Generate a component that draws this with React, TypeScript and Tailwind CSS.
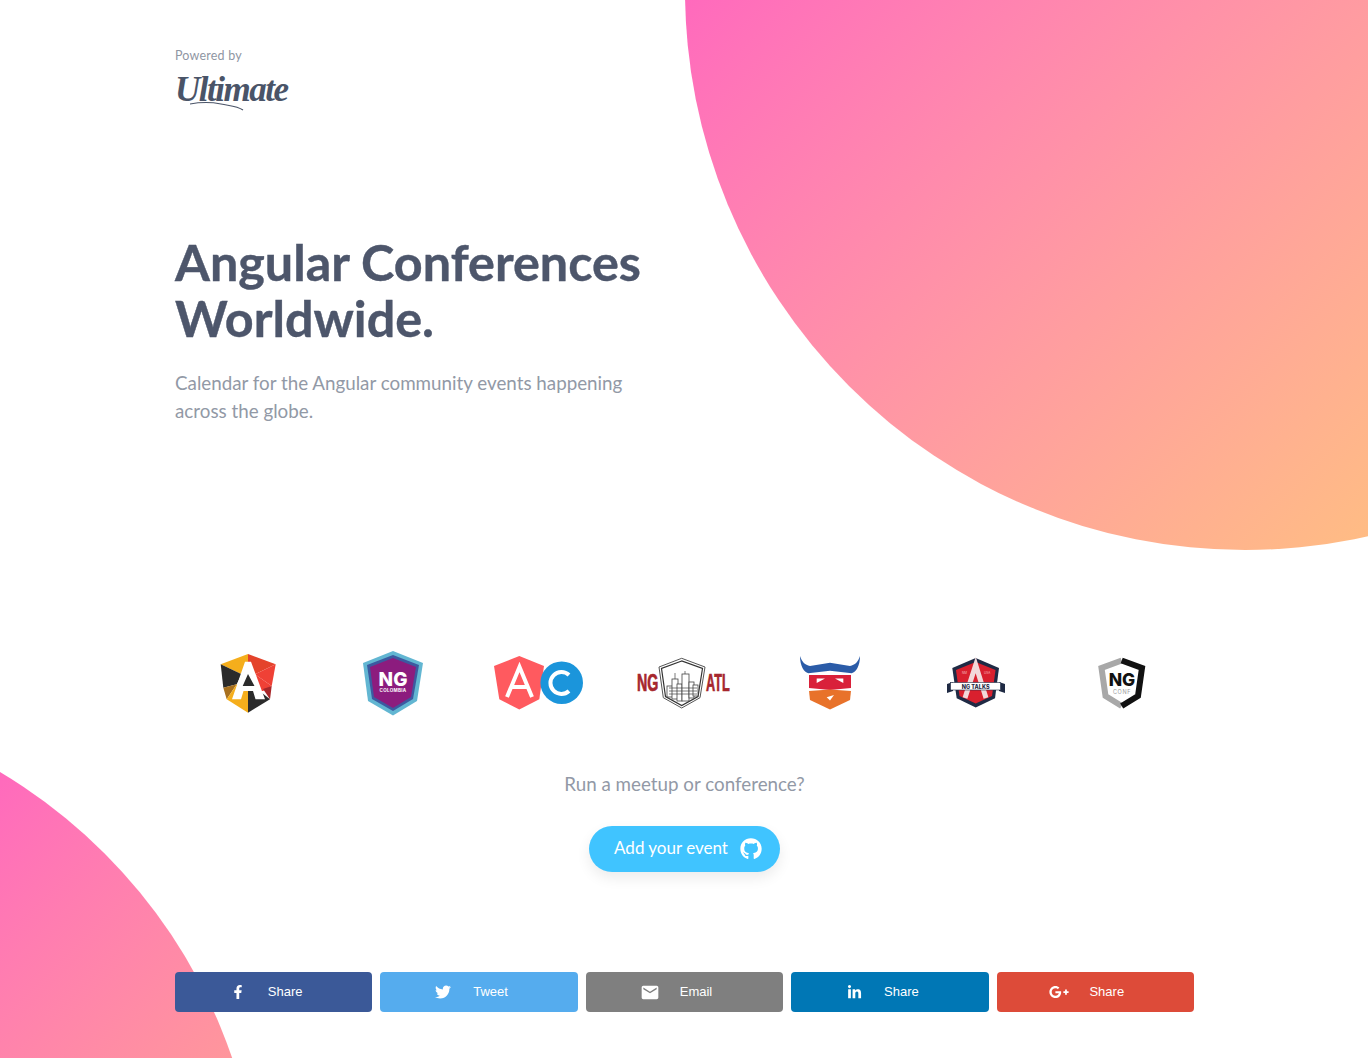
import React from 'react'
import { FaFacebookF, FaGithub, FaGooglePlusG, FaLinkedinIn, FaTwitter } from 'react-icons/fa'
import { MdEmail } from 'react-icons/md'

function AngularLogo() {
  return (
    <svg width="56" height="60" viewBox="220 652 56 60">
      <polygon points="248,653 220.7,663.3 241.7,673.3 248,673" fill="#f5ae1c" />
      <polygon points="248,653 275.7,663.3 255,673.3 248,673" fill="#e4432b" />
      <polygon points="275.7,663.3 271.7,685 255,673.3" fill="#ef4136" />
      <polygon points="255,673.3 271.7,685 263,690 255,690" fill="#ef4136" />
      <polygon points="271.7,685 270,698.3 263,688" fill="#a8272a" />
      <polygon points="220.7,663.3 241.7,673.3 236.7,683.3 223.3,686.7" fill="#2b2b2b" />
      <polygon points="223.3,686.7 236.7,683.3 226.7,698.3" fill="#a8701e" />
      <polygon points="226.7,698.3 248,711.7 248,685 236.7,683.3" fill="#f5ae1c" />
      <polygon points="248,711.7 270,698.3 257,688 248,688" fill="#2b2b2b" />
      <polygon points="248,668 241,686 256,686" fill="#2b2b2b" />
      <path fillRule="evenodd" d="M245 660.7 H251 L265 698.3 H255.5 L253 690 H243.5 L241 698.3 H232 Z M248 673 L242.7 685 H254.5 Z" fill="#fff" />
    </svg>
  )
}

function ColombiaLogo() {
  return (
    <svg width="60" height="65" viewBox="363 650 60 65">
      <polygon points="393,650 423,662 417,700 393,714.5 368,700 363,662" fill="#62b6d2" />
      <polygon points="393,654 419,664 413,698 393,710 372,698 367,664" fill="#3c5aa0" />
      <polygon points="393,657 416,666 411,696 393,707 374,696 370,666" fill="#8c1c7e" />
      <text x="393" y="685" textAnchor="middle" fill="#fff" fontSize="19" fontWeight="800" fontFamily="Inter, sans-serif">NG</text>
      <text x="393" y="690.5" textAnchor="middle" fill="#fff" fontSize="4.5" fontWeight="700" fontFamily="Inter, sans-serif" letterSpacing="0.3">COLOMBIA</text>
    </svg>
  )
}

function AcLogo() {
  return (
    <svg width="90" height="54" viewBox="494 656 90 54">
      <polygon points="519.3,656 494,666 499.3,699.3 519.3,709.5 539.3,699.3 544,666" fill="#ff5a5f" />
      <circle cx="561.7" cy="682.7" r="21.3" fill="#1b95db" />
      <path d="M507 697 L519.5 667 L532 697 M511 687 H528" stroke="#fff" strokeWidth="4" fill="none" />
      <path d="M569 675 A11 11 0 1 0 569 691" stroke="#fff" strokeWidth="4" fill="none" />
    </svg>
  )
}

function AtlLogo() {
  return (
    <svg width="96" height="54" viewBox="636 655 96 54">
      <g transform="translate(637 690) scale(0.62 1)">
        <text fill="#a6272d" stroke="#a6272d" strokeWidth="0.7" fontSize="23" fontWeight="700" fontFamily="'Liberation Sans', sans-serif">NG</text>
      </g>
      <g transform="translate(706 690) scale(0.55 1)">
        <text fill="#a6272d" stroke="#a6272d" strokeWidth="0.7" fontSize="23" fontWeight="700" fontFamily="'Liberation Sans', sans-serif">ATL</text>
      </g>
      <polygon points="681.7,657.3 659,666 663.3,696.7 681.7,707 700,696.7 705,666" fill="#fff" stroke="#555" strokeWidth="1" />
      <polygon points="681.7,660 661.5,667.5 665.5,695.5 681.7,704.5 698,695.5 702.5,667.5" fill="#fff" stroke="#333" strokeWidth="1.2" />
      <g stroke="#444" strokeWidth="0.8" fill="#fff">
        <rect x="667" y="685" width="6" height="11" />
        <rect x="672" y="678" width="6" height="20" />
        <rect x="677" y="683" width="5" height="17" />
        <rect x="682" y="673" width="7" height="27" />
        <rect x="689" y="681" width="5" height="16" />
        <rect x="693" y="684" width="5" height="11" />
      </g>
      <path d="M675 678 V672 M685 673 V670 M669 687 H697 M669 690 H697 M669 693 H697" stroke="#444" strokeWidth="0.7" />
    </svg>
  )
}

function VikingLogo() {
  return (
    <svg width="60" height="54" viewBox="800 656 60 54">
      <path d="M800 656 C802 662 805 665 810 666 L830 662.7 L850 666 C855 665 858 662 860 656 C860 666 856 672 851.7 673.3 L830 670.7 L808.3 673.3 C804 672 800 666 800 656 Z" fill="#2b5ca8" />
      <polygon points="809,675 851,675 851,688 830,690 809,688" fill="#d9213a" />
      <polygon points="809,691 830,689.5 851,691 850,700 830,709.5 810,700" fill="#e8722a" />
      <polygon points="816.7,678.5 825,678.5 816.7,683" fill="#fff" />
      <polygon points="843.3,678.5 835,678.5 843.3,683" fill="#fff" />
      <polygon points="826.7,697.3 834,695 830,700.5" fill="#fff" />
    </svg>
  )
}

function TalksLogo() {
  return (
    <svg width="60" height="52" viewBox="946 657 60 52">
      <polygon points="975.7,658 952.3,668 956.7,698.3 975.7,707.5 995,698.3 999,668" fill="#1f2a44" />
      <polygon points="975.7,662 956,670 959.5,696 975.7,703.5 992,696 995.5,670" fill="#d9202e" />
      <path d="M965 698 L975.7 665 L986 698" stroke="#f2d8da" strokeWidth="5" fill="none" />
      <polygon points="947,684 953,682 953,691 947,693" fill="#1f2a44" />
      <polygon points="1005,684 999,682 999,691 1005,693" fill="#1f2a44" />
      <rect x="950.5" y="682.5" width="50" height="7.5" fill="#fff" stroke="#1f2a44" strokeWidth="0.6" />
      <text x="975.7" y="688.5" textAnchor="middle" fill="#1f2a44" fontSize="5.5" fontWeight="800" fontFamily="Inter, sans-serif">NG TALKS</text>
      <text x="962" y="674" fill="#f4b9bd" fontSize="3" fontFamily="Inter, sans-serif">NM</text>
      <text x="984" y="674" fill="#f4b9bd" fontSize="3" fontFamily="Inter, sans-serif">USA</text>
    </svg>
  )
}

function NgConfLogo() {
  return (
    <svg className="ml-[2px]" width="48" height="53" viewBox="1098 656 48 53">
      <path d="M1121.7 659.5 L1101.5 667 L1105.5 695 L1121.7 705" stroke="#a8a8a8" strokeWidth="6" fill="none" />
      <path d="M1121.7 659.5 L1142 667 L1138 695 L1121.7 705" stroke="#111" strokeWidth="6" fill="none" />
      <text x="1122" y="685" textAnchor="middle" fill="#111" fontSize="17.5" fontWeight="800" fontFamily="Inter, sans-serif">NG</text>
      <text x="1122" y="692.5" textAnchor="middle" fill="#9a9a9a" fontSize="5.5" fontFamily="Inter, sans-serif" letterSpacing="0.6">CONF</text>
    </svg>
  )
}

const shareButtons = [
  { label: 'Share', bg: 'bg-[#3b5998]', icon: <FaFacebookF size={14} /> },
  { label: 'Tweet', bg: 'bg-[#55acee]', icon: <FaTwitter size={16} /> },
  { label: 'Email', bg: 'bg-[#7f7f7f]', icon: <MdEmail size={21} /> },
  { label: 'Share', bg: 'bg-[#0077b5]', icon: <FaLinkedinIn size={15} /> },
  { label: 'Share', bg: 'bg-[#dd4b39]', icon: <FaGooglePlusG size={22} /> },
]

export default function App() {
  return (
    <div className="relative h-[1058px] overflow-hidden bg-white pl-[175px] pr-[174px] font-['Lato',sans-serif]">
      <div className="absolute left-[685px] top-[-570px] h-[1120px] w-[1120px] rounded-full bg-linear-to-br from-[#ff69bd] from-25% to-[#ffbc84] to-80%" />
      <div className="absolute left-[-807px] top-[697px] h-[1068px] w-[1068px] rounded-full bg-linear-to-br from-[#ff69bd] from-41% to-[#ffa58c] to-75%" />

      <div className="relative">
        <div className="pt-[48px]">
          <p className="text-[12.5px] leading-4 tracking-[0.2px] text-[#8f96a3]">Powered by</p>
          <div className="relative h-[45px] w-[115px]">
            <span className="absolute left-0 top-[3px] font-['Liberation_Serif',serif] text-[35px] font-bold italic leading-[46px] tracking-[-1.5px] text-[#4a5468]">Ultimate</span>
            <svg className="absolute left-[14px] top-[37px]" width="56" height="10" viewBox="0 0 56 10">
              <path d="M1 3 C12 1 22 1 32 3 C42 5 48 5 54 9" stroke="#4a5468" strokeWidth="1.2" fill="none" />
            </svg>
          </div>
        </div>

        <h1 className="mt-[125px] text-[50.3px] font-bold leading-[56px] text-[#4d566b] [-webkit-text-stroke:0.4px_#4d566b]">
          Angular Conferences
          <br />
          Worldwide.
        </h1>
        <p className="mt-[23px] text-[18.8px] leading-7 text-[#9299a6]">
          Calendar for the Angular community events happening
          <br />
          across the globe.
        </p>

        <div className="mt-[225px] grid h-[66px] grid-cols-7 items-center justify-items-center">
          <AngularLogo />
          <ColombiaLogo />
          <AcLogo />
          <AtlLogo />
          <VikingLogo />
          <TalksLogo />
          <NgConfLogo />
        </div>

        <p className="mt-[54px] text-center text-[18.8px] leading-7 text-[#9299a6]">Run a meetup or conference?</p>

        <div className="mt-[28px] flex justify-center">
          <button className="flex h-[46px] w-[191px] items-center justify-center gap-3 rounded-full bg-[#40c4ff] pl-[7px] text-[17px] text-white shadow-[0_6px_14px_rgba(0,0,0,0.08)]">
            <span className="-mt-[3px]">Add your event</span>
            <FaGithub size={22} />
          </button>
        </div>

        <div className="mt-[100px] grid grid-cols-5 gap-2">
          {shareButtons.map((b, i) => (
            <a key={i} className={`flex h-10 items-center justify-center gap-5 rounded pr-[17px] font-['Liberation_Sans',sans-serif] text-[13px] text-white ${b.bg}`}>
              <span className="flex w-5 justify-center">{b.icon}</span>
              {b.label}
            </a>
          ))}
        </div>
      </div>
    </div>
  )
}
